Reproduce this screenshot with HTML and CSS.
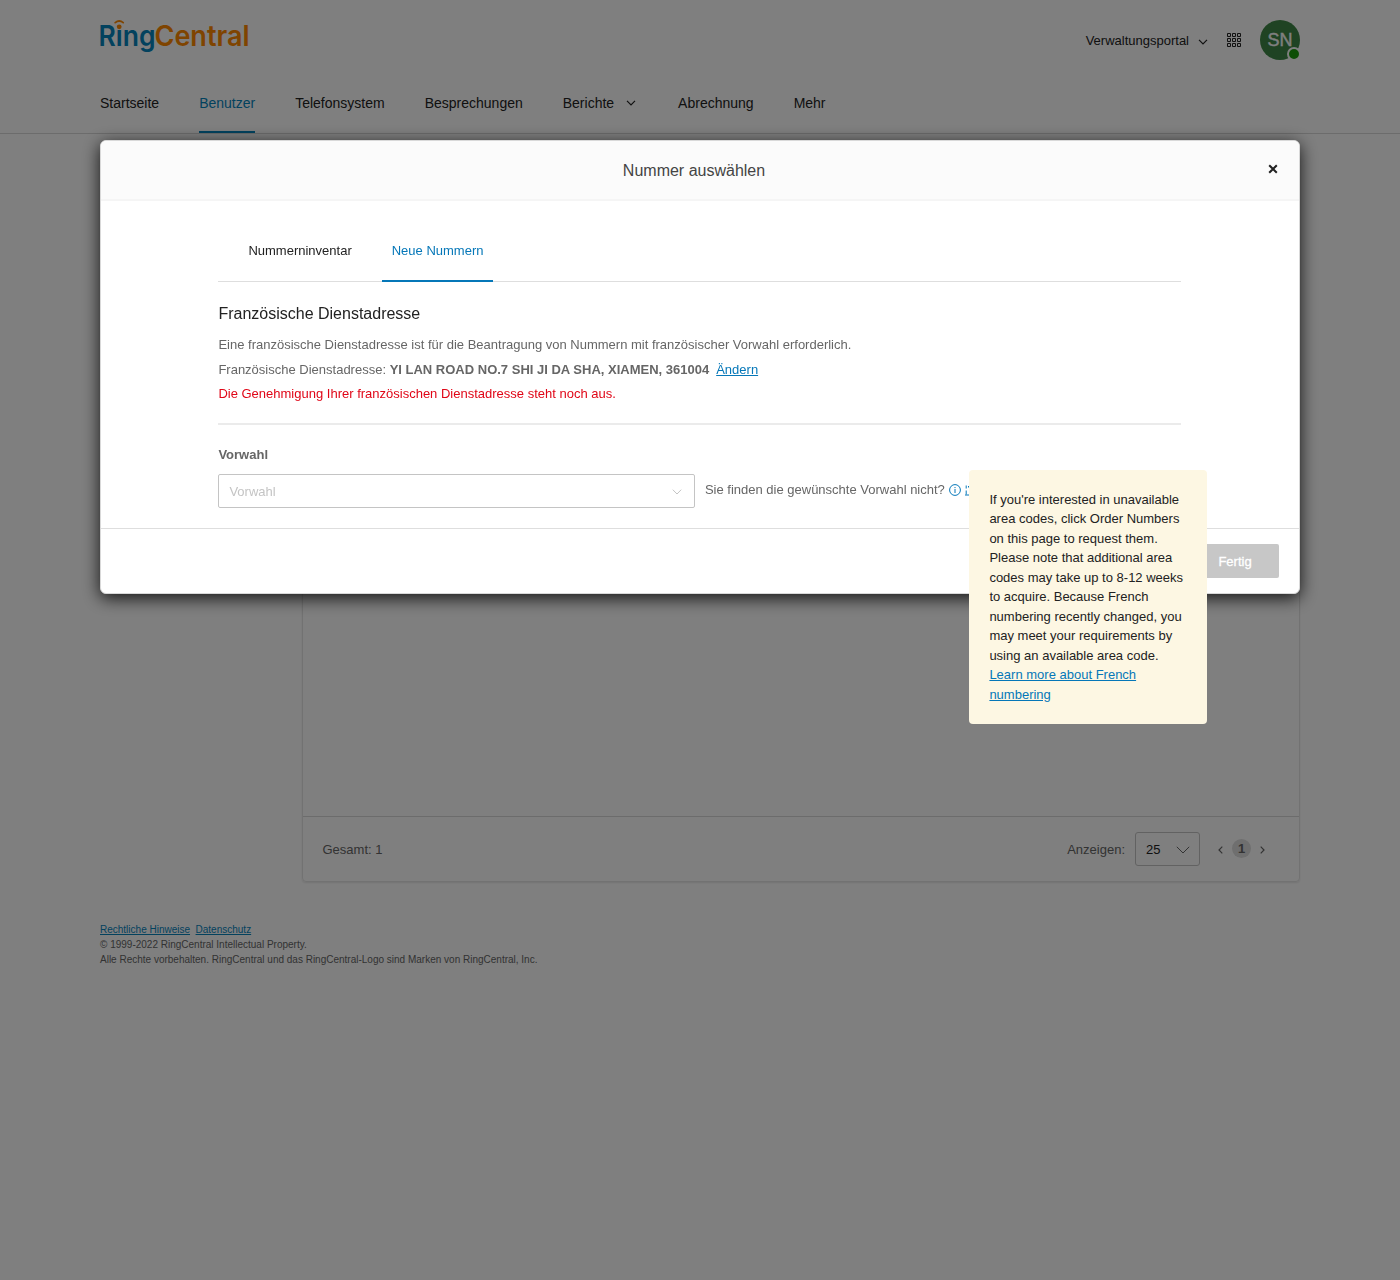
FILE: index.html
```html
<!DOCTYPE html>
<html lang="de">
<head>
<meta charset="utf-8">
<title>Nummer auswählen</title>
<link rel="stylesheet" href="styles.css">
</head>
<body>
<header class="site-header">
  <div class="top-bar">
    <svg class="logo" width="150" height="36" viewBox="0 0 150 36">
      <text class="logo-ring" x="-1.5" y="28" textLength="57" lengthAdjust="spacingAndGlyphs">Ring</text>
      <text class="logo-central" x="54.5" y="28" textLength="95" lengthAdjust="spacingAndGlyphs">Central</text>
      <circle class="logo-clear" cx="19.2" cy="7.600" r="4"/>
      <circle class="logo-dot" cx="19.2" cy="8.800" r="2.400"/>
      <path class="logo-wave" d="M15.200 4.600Q19.200 1.400 23.200 4.600"/>
    </svg>
    <div class="account">
      <span class="portal">Verwaltungsportal</span>
      <svg class="portal-arrow" width="10" height="6" viewBox="0 0 10 6"><path d="M1 .8l4 4 4-4"/></svg>
      <svg class="apps" width="14" height="14" viewBox="0 0 14 14"><path d="M.5.5h3v3h-3zM5.5.5h3v3h-3zM10.5.5h3v3h-3zM.5 5.5h3v3h-3zM5.5 5.5h3v3h-3zM10.5 5.5h3v3h-3zM.5 10.5h3v3h-3zM5.5 10.5h3v3h-3zM10.5 10.5h3v3h-3z"/></svg>
      <div class="avatar">SN<span class="presence"></span></div>
    </div>
  </div>
  <nav class="main-nav">
    <a>Startseite</a><a class="active">Benutzer</a><a>Telefonsystem</a><a>Besprechungen</a><a>Berichte<svg width="10" height="6" viewBox="0 0 10 6"><path d="M1 .8l4 4 4-4"/></svg></a><a>Abrechnung</a><a>Mehr</a>
  </nav>
</header>
<main class="page">
  <section class="card">
    <div class="card-body"></div>
    <div class="card-footer">
      <span class="footer-text">Gesamt: 1</span>
      <div class="pager">
        <span class="footer-text">Anzeigen:</span>
        <div class="page-size">25<svg width="14" height="8" viewBox="0 0 14 8"><path d="M.8.8L7 7 13.200.8"/></svg></div>
        <svg class="step" width="5" height="8" viewBox="0 0 5 8"><path d="M4.300.700L1 4l3.300 3.300"/></svg>
        <span class="page-no">1</span>
        <svg class="step" width="5" height="8" viewBox="0 0 5 8"><path d="M.7.7L4 4 .7 7.300"/></svg>
      </div>
    </div>
  </section>
  <footer class="legal">
    <div><a class="legal-first">Rechtliche Hinweise</a><a>Datenschutz</a></div>
    <div>© 1999-2022 RingCentral Intellectual Property.</div>
    <div>Alle Rechte vorbehalten. RingCentral und das RingCentral-Logo sind Marken von RingCentral, Inc.</div>
  </footer>
</main>
<div class="overlay">
  <div class="modal">
    <div class="modal-header">
      <h1>Nummer auswählen</h1>
      <svg class="close" width="10" height="10" viewBox="0 0 10 10"><path d="M1.200 1.200l7.600 7.600M8.800 1.200L1.200 8.800"/></svg>
    </div>
    <div class="modal-body">
      <div class="tabs"><a>Nummerninventar</a><a class="active">Neue Nummern</a></div>
      <h2>Französische Dienstadresse</h2>
      <p class="intro">Eine französische Dienstadresse ist für die Beantragung von Nummern mit französischer Vorwahl erforderlich.</p>
      <p class="address">Französische Dienstadresse: <b>YI LAN ROAD NO.7 SHI JI DA SHA, XIAMEN, 361004</b><a>Ändern</a></p>
      <p class="warning">Die Genehmigung Ihrer französischen Dienstadresse steht noch aus.</p>
      <div class="divider"></div>
      <div class="label">Vorwahl</div>
      <div class="code-row">
        <div class="select">Vorwahl<svg width="10" height="6" viewBox="0 0 10 6"><path d="M.8.700L5 5 9.200.700"/></svg></div>
        <span class="hint">Sie finden die gewünschte Vorwahl nicht?</span>
        <svg class="info" width="12" height="12" viewBox="0 0 12 12"><circle cx="6" cy="6" r="5.400"/><path d="M6 5v4M6 3v1.100"/></svg>
        <svg class="cut-link" width="5" height="11" viewBox="0 0 5 11"><path d="M0 10h5M1.200.500v3M1.200 5.500v4M3.500 1v1.500"/></svg>
      </div>
    </div>
    <div class="modal-footer"><button>Fertig</button></div>
    <div class="tooltip">If you're interested in unavailable<br>area codes, click Order Numbers<br>on this page to request them.<br>Please note that additional area<br>codes may take up to 8-12 weeks<br>to acquire. Because French<br>numbering recently changed, you<br>may meet your requirements by<br>using an available area code.<br><a>Learn more about French<br>numbering</a></div>
  </div>
</div>
</body>
</html>
```
FILE: styles.css
```css
* { box-sizing: border-box; }
html, body { height: 100%; }
body {
  margin: 0;
  overflow: hidden;
  background: #fff;
  color: #666;
  font: 13px/20px "Liberation Sans", Arial, sans-serif;
}
h1, h2, p { margin: 0; font-weight: 400; }
svg { display: block; flex: none; fill: none; stroke: #222; }

.site-header { height: 134px; border-bottom: 1px solid #d8d8d8; padding: 0 100px; }
.top-bar { display: flex; justify-content: space-between; height: 80px; padding-top: 18px; }
.logo { stroke: none; overflow: visible; }
.logo text { font: 600 28.500px Inter, "Liberation Sans", sans-serif; }
.logo-ring { fill: #0684bd; }
.logo-central, .logo-dot { fill: #ff8800; }
.logo-clear { fill: #fff; }
.logo-wave { stroke: #ff8800; stroke-width: 1.8; stroke-linecap: round; }
.account { display: flex; align-items: center; height: 44px; }
.portal { color: #222; padding-top: 2px; }
.portal-arrow { margin: 3px 19px 0 9px; stroke-width: 1.2; }
.apps { margin-right: 19px; }
.avatar {
  position: relative;
  width: 40px; height: 40px;
  border-radius: 50%;
  background: #3f8746;
  color: #fff;
  font-size: 18px; line-height: 40px; text-align: center;
  -webkit-text-stroke: .4px #fff;
}
.presence {
  position: absolute; right: -1px; bottom: -1px;
  width: 14px; height: 14px;
  border: 2px solid #fff; border-radius: 50%;
  background: #1a9c0c;
}
.main-nav { display: flex; gap: 40px; height: 53px; color: #222; font-size: 14px; line-height: 46px; }
.main-nav a { display: flex; align-items: center; height: 53px; padding-bottom: 7px; }
.main-nav svg { margin: 0 2px 0 12px; stroke-width: 1.2; }
.main-nav .active { color: #0684bd; border-bottom: 2px solid #0684bd; padding-bottom: 5px; }

.card {
  width: 998.500px; height: 728px;
  margin: 20px 0 0 301.500px;
  border: 1px solid #e4e4e4; border-radius: 4px;
  box-shadow: 0 1px 2px rgba(0, 0, 0, .1);
}
.card-body { height: 661px; }
.card-footer {
  display: flex; align-items: center; justify-content: space-between;
  height: 65px; padding: 0 34px 0 20px;
  border-top: 1px solid #d8d8d8;
}
.footer-text { padding-top: 2px; }
.pager { display: flex; align-items: center; }
.page-size {
  display: flex; align-items: center; justify-content: space-between;
  width: 65px; height: 34px;
  margin: 0 18px 0 10px; padding: 1px 9px 0 10px;
  border: 1px solid #c4c4c4; border-radius: 3px;
  color: #222;
}
.pager svg { stroke: #666; }
.pager .step { margin-top: 2px; stroke-width: 1.2; }
.page-no {
  width: 19px; height: 19px; margin: -1px 9px 0;
  border-radius: 50%; background: #dedede;
  font-weight: 700; line-height: 20px; text-align: center;
}
.legal { padding: 40px 100px; font-size: 10px; line-height: 15px; }
.legal a { color: #0684bd; text-decoration: underline; }
.legal-first { margin-right: 5.500px; }

.overlay { position: fixed; inset: 0; padding: 140px 100px; background: rgba(0, 0, 0, .5); }
.modal {
  position: relative;
  display: flex; flex-direction: column;
  height: 454px;
  border: 1px solid #d9d9d9; border-radius: 6px;
  background: #fff;
  box-shadow: 0 4px 17px rgba(0, 0, 0, .85);
}
.modal-header {
  display: flex; align-items: center;
  height: 60px; padding: 0 21px 0 19px;
  border-bottom: 2px solid #f5f5f5; border-radius: 5px 5px 0 0;
  background: #fbfbfb;
}
.modal-header h1 { flex: 1; padding-top: 2px; color: #444; font-size: 16px; text-align: center; }
.close { margin-top: -2px; stroke-width: 2; }
.modal-body { flex: 1; padding: 20px 118px 0 117.400px; }
.tabs { display: flex; gap: 20px; height: 61px; padding-left: 20px; border-bottom: 1px solid #dedede; color: #222; }
.tabs a { height: 61px; padding: 20px 10px 0; }
.tabs .active { color: #0577b8; border-bottom: 2px solid #0577b8; }
h2 { margin-top: 22px; color: #222; font-size: 16px; }
.intro { margin-top: 11px; }
.address { margin-top: 5px; }
.address a { margin-left: 7px; }
.address a, .tooltip a { color: #0577b8; text-decoration: underline; }
.warning { margin-top: 4px; color: #e00617; }
.divider { margin-top: 19px; height: 2px; background: #ebebeb; }
.label { margin-top: 20px; font-weight: 700; }
.code-row { display: flex; margin-top: 9px; }
.select {
  display: flex; align-items: center; justify-content: space-between;
  width: 476.500px; height: 34px;
  padding: 1px 12px 0 10px;
  border: 1px solid #c4c4c4; border-radius: 2px;
  color: #c4c4c4;
}
.select svg { stroke: #c4c4c4; }
.hint { margin: 6px 4px 0 10px; white-space: nowrap; }
.info { margin-top: 10px; stroke: #0577b8; }
.cut-link { margin: 11px 0 0 4px; stroke: #0577b8; }
.modal-footer { display: flex; justify-content: flex-end; height: 65px; padding: 15px 20px; border-top: 1px solid #dedede; }
.modal-footer button {
  width: 88px; height: 34px; padding: 0;
  border: 0; border-radius: 2px;
  background: #c7c7c7; color: #fff;
  font: 13px "Liberation Sans", Arial, sans-serif;
  -webkit-text-stroke: .3px #fff;
}
.tooltip {
  position: absolute; left: 868.400px; top: 328.600px;
  width: 237.500px; height: 254.400px;
  padding: 20px;
  border-radius: 4px;
  background: #fdf7e3; color: #222;
  line-height: 19.500px; white-space: nowrap;
}
```
